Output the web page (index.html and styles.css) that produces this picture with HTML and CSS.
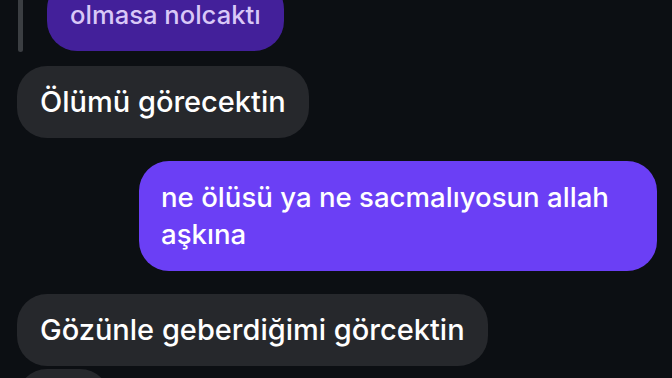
FILE: index.html
```html
<!DOCTYPE html>
<html lang="tr">
<head>
  <meta charset="UTF-8">
  <meta name="viewport" content="width=device-width, initial-scale=1.0">

  <title>Sohbet</title>

  <link rel="stylesheet" href="styles.css">
</head>
<body>
  <div class="chat">
    <div class="reply">
      <div class="reply__bar"></div>
      <div class="bubble bubble--quote">olmasa nolcaktı</div>
    </div>

    <div class="msg">
      <div class="bubble">Ölümü görecektin</div>
    </div>

    <div class="msg msg--out">
      <div class="bubble bubble--out">ne ölüsü ya ne sacmalıyosun allah aşkına</div>
    </div>

    <div class="msg">
      <div class="bubble">Gözünle geberdiğimi görcektin</div>
    </div>

    <div class="msg msg--next">
      <div class="bubble bubble--stub"></div>
    </div>
  </div>
</body>
</html>
```

FILE: styles.css
```css
* {
  box-sizing: border-box;
}

body, html {
  margin: 0;
  padding: 0;
  height: 100%;
  overflow: hidden;
  background: #0c0f13;
  font-family: Inter, "Noto Sans", sans-serif;
}

.chat {
  margin-top: -21px;
  padding: 0 15px 0 17px;
  display: flex;
  flex-direction: column;
}

.reply {
  display: flex;
  gap: 24px;
  margin-bottom: 15px;
}

.reply__bar {
  width: 5px;
  margin-left: 1px;
  margin-bottom: -1px;
  border-radius: 3px;
  background: #3b3e42;
}

.msg {
  display: flex;
  margin-bottom: 23px;
}

.msg--out {
  justify-content: flex-end;
  margin-bottom: 23px;
}

.msg--next {
  margin-top: -20px;
}

.bubble {
  max-width: 518px;
  padding: 18px 23px;
  border-radius: 30px;
  background: #26282c;
  color: #fff;
  font-size: 29px;
  font-weight: 500;
  line-height: 36px;
}

.bubble--out {
  background: #6b3ff5;
  padding-left: 22px;
  font-size: 27.6px;
  line-height: 37px;
}

.bubble--quote {
  background: #43209a;
  color: #d9c8f7;
  font-size: 25.6px;
}

.bubble--stub {
  width: 93px;
  height: 72px;
}
```
